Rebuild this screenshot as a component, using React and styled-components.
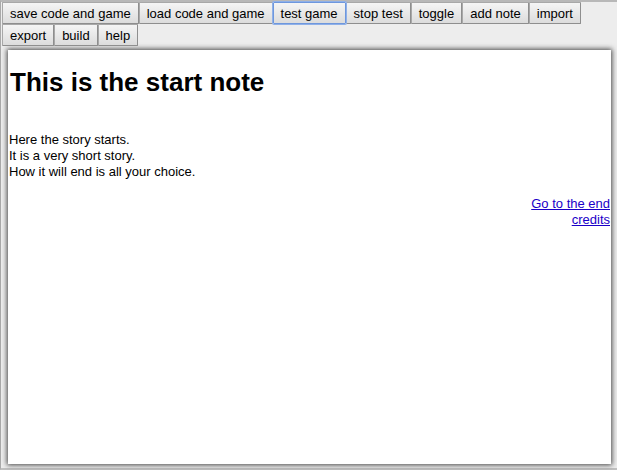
import React from "react";
import styled, { createGlobalStyle } from "styled-components";

const GlobalStyle = createGlobalStyle`
  html, body, #root { height: 100%; }
  body {
    margin: 0;
    background: #ededed;
    color: #000;
    font-family: "Liberation Sans", Arial, sans-serif;
    font-size: 13px;
    line-height: 16px;
  }
`;

const Frame = styled.main`
  box-sizing: border-box;
  min-height: 100%;
  display: flex;
  flex-direction: column;
  border-top: 2px solid #b8b8b8;
  border-left: 1px solid #a9a9a9;
  border-bottom: 2px solid #c0c0c0;
  padding: 0 6px 4px 0;
`;

const Toolbar = styled.div`
  display: flex;
  flex-wrap: wrap;
  padding: 0 30px 0 1px;
`;

const ToolButton = styled.button`
  box-sizing: border-box;
  height: 22px;
  padding: 2px 7px 0;
  border: 1px solid;
  border-color: ${(p) => (p.$focused ? "#6e97dd" : "#a8a8a8 #8e8e8e #8e8e8e #a8a8a8")};
  border-radius: 1px;
  box-shadow: ${(p) => (p.$focused ? "0 0 0 1px #8fb0e8" : "none")};
  position: relative;
  z-index: ${(p) => (p.$focused ? 1 : 0)};
  background: linear-gradient(#f5f5f5, #dcdcdc);
  color: #000;
  font: inherit;
  white-space: nowrap;
`;

const Note = styled.article`
  flex: 1;
  margin: 4px 0 0 7px;
  padding: 0 1px;
  background: #fff;
  box-shadow: 0 0 5px 1px #444;
`;

const Title = styled.h1`
  margin: 16px 1px 0;
  font-size: 26px;
  line-height: 32px;
`;

const Story = styled.p`
  margin: 34px 0 16px;
`;

const Choices = styled.nav`
  display: flex;
  justify-content: flex-end;
`;

const Choice = styled.a`
  width: 100px;
  text-align: right;
  color: #1a00c8;
`;

const actions = [
  "save code and game",
  "load code and game",
  "test game",
  "stop test",
  "toggle",
  "add note",
  "import",
  "export",
  "build",
  "help",
];

export default function App() {
  return (
    <>
      <GlobalStyle />
      <Frame>
        <Toolbar>
          {actions.map((label) => (
            <ToolButton key={label} type="button" $focused={label === "test game"}>
              {label}
            </ToolButton>
          ))}
        </Toolbar>
        <Note>
          <Title>This is the start note</Title>
          <Story>
            Here the story starts.
            <br />
            It is a very short story.
            <br />
            How it will end is all your choice.
          </Story>
          <Choices>
            <Choice href="#credits">Go to the end credits</Choice>
          </Choices>
        </Note>
      </Frame>
    </>
  );
}
